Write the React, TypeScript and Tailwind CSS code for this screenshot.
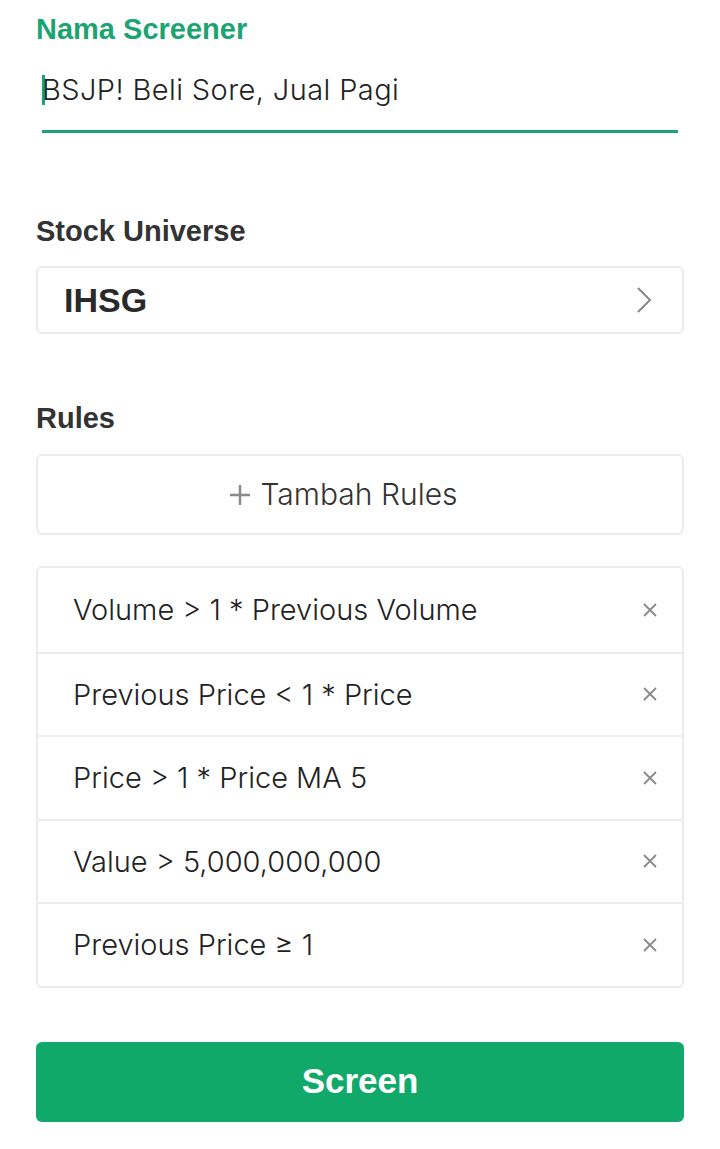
import React from "react";

const rules = [
  "Volume > 1 * Previous Volume",
  "Previous Price < 1 * Price",
  "Price > 1 * Price MA 5",
  "Value > 5,000,000,000",
  "Previous Price ≥ 1",
];

const heading = { fontFamily: '"Liberation Sans", Arial, sans-serif' };
const body = { fontFamily: 'Inter, "Noto Sans", sans-serif' };

export default function App() {
  return (
    <div className="w-[720px] h-[1149px] bg-white px-[36px] pt-[13px]" style={body}>
      {/* Nama screener */}
      <div
        className="text-[29px] font-bold text-[#1ba472] leading-[32px]"
        style={heading}
      >
        Nama Screener
      </div>
      <div className="pl-[6px] mt-[25px]">
        <div className="flex items-center h-[40px]">
          <span className="w-[3px] h-[30px] bg-[#1ba472] -mr-[3px]" />
          <span className="text-[29px] text-[#222] tracking-[0.4px] font-light">
            BSJP! Beli Sore, Jual Pagi
          </span>
        </div>
        <div className="mt-[20px] h-[3px] w-[636px] bg-[#1ba472]" />
      </div>

      {/* Stock universe */}
      <div
        className="mt-[82px] text-[29px] font-bold text-[#333] leading-[32px]"
        style={heading}
      >
        Stock Universe
      </div>
      <div className="mt-[19px] h-[68px] rounded-[6px] border-2 border-[#ececec] flex items-center justify-between pl-[26px] pr-[29px]">
        <span className="text-[34px] font-bold text-[#2a2a2a]" style={heading}>
          IHSG
        </span>
        <svg width="18" height="28" viewBox="0 0 18 28" fill="none">
          <path d="M3 2 L15 14 L3 26" stroke="#888" strokeWidth="2" />
        </svg>
      </div>

      {/* Rules */}
      <div
        className="mt-[68px] text-[29px] font-bold text-[#333] leading-[32px]"
        style={heading}
      >
        Rules
      </div>
      <div className="mt-[20px] h-[81px] rounded-[6px] border-2 border-[#ececec] flex items-center justify-center gap-[10px] pr-[32px]">
        <svg width="20" height="20" viewBox="0 0 20 20">
          <path d="M10 0 V20 M0 10 H20" stroke="#8a8a8a" strokeWidth="2.5" />
        </svg>
        <span className="text-[30px] text-[#333] font-light">Tambah Rules</span>
      </div>

      <div className="mt-[31px] rounded-[6px] border-2 border-[#ececec]">
        {rules.map((r, i) => (
          <div
            key={r}
            className={`h-[83.5px] flex items-center justify-between pl-[35px] pr-[24px] ${
              i > 0 ? "border-t-2 border-[#ececec]" : ""
            }`}
          >
            <span className="text-[29px] text-[#222] font-light">{r}</span>
            <svg width="16" height="16" viewBox="0 0 16 16">
              <path d="M2 2 L14 14 M14 2 L2 14" stroke="#8a8a8a" strokeWidth="1.8" />
            </svg>
          </div>
        ))}
      </div>

      <button
        className="mt-[54px] w-full h-[80px] rounded-[6px] bg-[#10a96a] text-white text-[35px] font-bold"
        style={heading}
      >
        Screen
      </button>
    </div>
  );
}
